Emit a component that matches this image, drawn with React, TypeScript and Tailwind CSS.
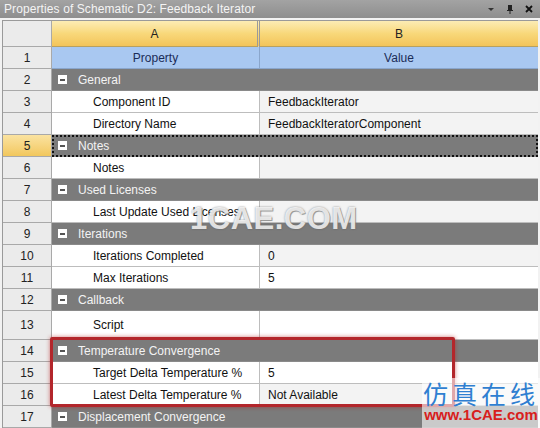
import React from "react";

type Row =
  | { n: number; kind: "group"; label: string; selected?: boolean }
  | { n: number; kind: "item"; label: string; value?: string; tall?: boolean; white?: boolean };

const rows: Row[] = [
  { n: 2, kind: "group", label: "General" },
  { n: 3, kind: "item", label: "Component ID", value: "FeedbackIterator" },
  { n: 4, kind: "item", label: "Directory Name", value: "FeedbackIteratorComponent" },
  { n: 5, kind: "group", label: "Notes", selected: true },
  { n: 6, kind: "item", label: "Notes" },
  { n: 7, kind: "group", label: "Used Licenses" },
  { n: 8, kind: "item", label: "Last Update Used Licenses" },
  { n: 9, kind: "group", label: "Iterations" },
  { n: 10, kind: "item", label: "Iterations Completed", value: "0" },
  { n: 11, kind: "item", label: "Max Iterations", value: "5", white: true },
  { n: 12, kind: "group", label: "Callback" },
  { n: 13, kind: "item", label: "Script", tall: true, white: true },
  { n: 14, kind: "group", label: "Temperature Convergence" },
  { n: 15, kind: "item", label: "Target Delta Temperature %", value: "5", white: true },
  { n: 16, kind: "item", label: "Latest Delta Temperature %", value: "Not Available" },
  { n: 17, kind: "group", label: "Displacement Convergence" },
];

const MinusBox = () => (
  <span className="inline-flex h-[9px] w-[9px] items-center justify-center bg-white">
    <span className="h-[2px] w-[5px] bg-[#555]" />
  </span>
);

const NumCell = ({ n, selected, tall }: { n: number; selected?: boolean; tall?: boolean }) => (
  <div
    className={`flex items-center justify-center border-r border-b border-[#a9a9a9] text-[12px] text-[#222] ${
      tall ? "h-[29px]" : "h-[22px]"
    } ${selected ? "bg-gradient-to-b from-[#fbe3a0] to-[#f2c75c]" : "bg-[#ebebeb]"}`}
  >
    {n}
  </div>
);

export default function App() {
  return (
    <div
      className="relative h-[428px] w-[540px] overflow-hidden bg-[#f2f2f2]"
      style={{ fontFamily: '"Liberation Sans", Arial, sans-serif' }}
    >
      {/* title bar */}
      <div className="flex h-[18px] items-center justify-between bg-gradient-to-b from-[#a3a3a3] to-[#8e8e8e] pl-[4px] pr-[6px]">
        <span className="text-[12px] tracking-[0.1px] text-[#f4f4f4]">
          Properties of Schematic D2: Feedback Iterator
        </span>
        <div className="flex items-center gap-[9px] text-[#222]">
          <svg width="10" height="10" viewBox="0 0 10 10">
            <path d="M2 4h6L5 7z" fill="#333" />
          </svg>
          <svg width="10" height="11" viewBox="0 0 10 11">
            <path d="M3 1h4v5H3z M2 6h6v1H2z M4.5 7h1v3h-1z M5.5 1.5h1v4h-1z" fill="#222" />
          </svg>
          <svg width="10" height="10" viewBox="0 0 10 10">
            <path d="M2 2l6 6M8 2l-6 6" stroke="#111" strokeWidth="1.8" />
          </svg>
        </div>
      </div>

      {/* grid */}
      <div className="ml-[2px] mr-[2px] mt-[2px] border-l border-t border-[#9a9a9a] bg-white">
        <div className="grid grid-cols-[49px_208px_1fr]">
          <div className="h-[26px] border-r border-b border-[#a9a9a9] bg-[#ebebeb]" />
          <div className="flex h-[26px] items-center justify-center border-r-[3px] border-double border-b border-b-[#b8a060] border-r-[#9a9a9a] bg-gradient-to-b from-[#fcecb4] via-[#f8d87a] to-[#f3c45a] text-[12px] text-[#222]">
            A
          </div>
          <div className="flex h-[26px] items-center justify-center border-b border-[#b8a060] bg-gradient-to-b from-[#fcecb4] via-[#f8d87a] to-[#f3c45a] text-[12px] text-[#222]">
            B
          </div>

          <NumCell n={1} />
          <div className="flex h-[22px] items-center justify-center border-r border-b border-[#8aa6cc] bg-[#a9c8f1] text-[12px] text-[#1b2c57]">
            Property
          </div>
          <div className="flex h-[22px] items-center justify-center border-b border-[#8aa6cc] bg-[#a9c8f1] text-[12px] text-[#1b2c57]">
            Value
          </div>

          {rows.map((r) =>
            r.kind === "group" ? (
              <React.Fragment key={r.n}>
                <NumCell n={r.n} selected={r.selected} />
                <div
                  className={`col-span-2 flex h-[22px] items-center gap-[11px] border-b border-[#8a8a8a] bg-[#7b7b7b] pl-[6px] text-[12px] text-[#f3f3f3] ${
                    r.selected ? "outline-2 -outline-offset-2 outline-dotted outline-[#111]" : ""
                  }`}
                >
                  <MinusBox />
                  {r.label}
                </div>
              </React.Fragment>
            ) : (
              <React.Fragment key={r.n}>
                <NumCell n={r.n} tall={r.tall} />
                <div
                  className={`flex items-center border-r border-b border-[#bdbdbd] bg-white pl-[41px] text-[12px] text-[#111] ${
                    r.tall ? "h-[29px]" : "h-[22px]"
                  }`}
                >
                  {r.label}
                </div>
                <div
                  className={`flex items-center border-b border-[#bdbdbd] pl-[8px] text-[12px] text-[#111] ${
                    r.tall ? "h-[29px]" : "h-[22px]"
                  } ${r.white ? "bg-white" : "bg-[#f3f3f3]"}`}
                >
                  {r.value}
                </div>
              </React.Fragment>
            )
          )}
        </div>
      </div>

      {/* highlight box */}
      <div className="absolute left-[50px] top-[337px] h-[70px] w-[405px] rounded-[2px] border-[3px] border-[#b3262b] shadow-[0_0_4px_rgba(180,30,30,0.6)]" />

      {/* watermark center */}
      <div
        className="absolute left-[190px] top-[196px] text-[31px] font-bold tracking-[0.5px] text-white/80"
        style={{ textShadow: "0 0 2px rgba(90,90,90,0.7), 1px 1px 0 rgba(120,120,120,0.6)" }}
      >
        1CAE.COM
      </div>

      {/* watermark corner */}
      <div className="absolute right-0 bottom-0 flex h-[50px] w-[118px] flex-col items-center bg-white/60 pt-[2px]">
        <span
          className="text-[25px] leading-[26px] tracking-[4px] text-[#2f7fd1]"
          style={{ fontFamily: '"Noto Sans CJK SC", sans-serif' }}
        >
          仿真在线
        </span>
        <span className="text-[15px] font-bold leading-[18px] text-[#d8201c]">www.1CAE.com</span>
      </div>
    </div>
  );
}
